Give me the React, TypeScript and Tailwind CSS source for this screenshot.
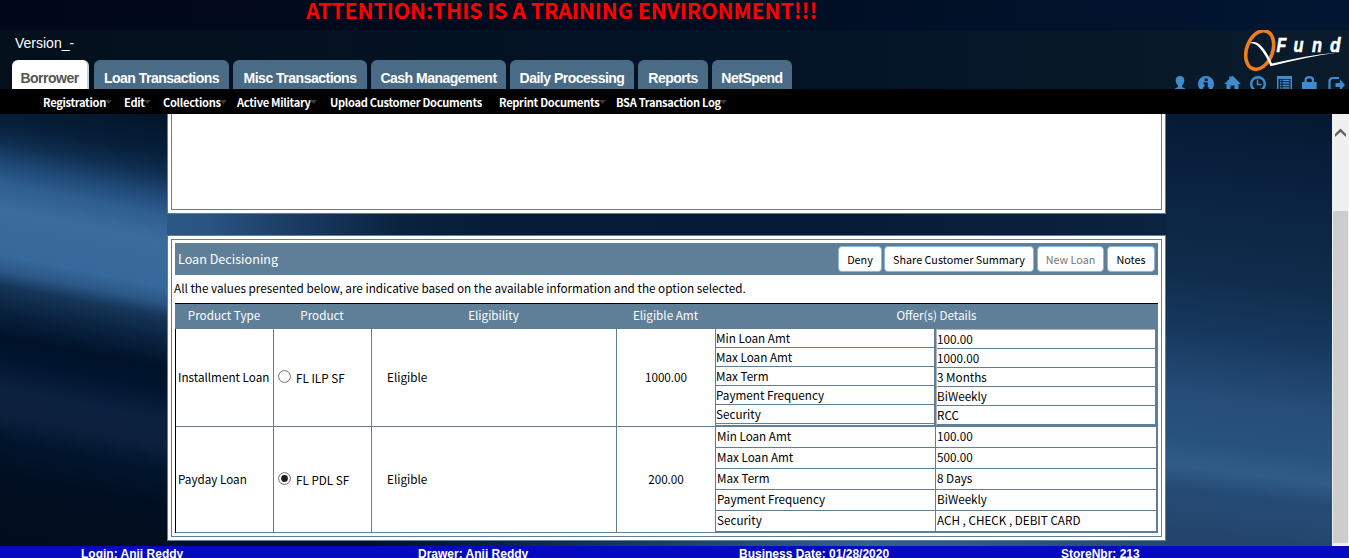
import React from "react";

const tabs = [
  { label: "Borrower", cls: "ml-3 w-[77px] mr-[5px] bg-white text-[#555] border-r-2 border-[#c9d3db]" },
  { label: "Loan Transactions", cls: "w-[135px] mr-1 bg-[#4a6b85] text-white" },
  { label: "Misc Transactions", cls: "w-[134px] mr-1 bg-[#4a6b85] text-white" },
  { label: "Cash Management", cls: "w-[135px] mr-1 bg-[#4a6b85] text-white" },
  { label: "Daily Processing", cls: "w-[124px] mr-1 bg-[#4a6b85] text-white" },
  { label: "Reports", cls: "w-[70px] mr-1 bg-[#4a6b85] text-white" },
  { label: "NetSpend", cls: "w-[80px] bg-[#4a6b85] text-white" },
];

const menu = [
  { label: "Registration", cls: "w-[81px]", arrow: true },
  { label: "Edit", cls: "w-[39px]", arrow: true },
  { label: "Collections", cls: "w-[74px]", arrow: true },
  { label: "Active Military", cls: "w-[93px]", arrow: true },
  { label: "Upload Customer Documents", cls: "w-[169px]", arrow: false },
  { label: "Reprint Documents", cls: "w-[117px]", arrow: true },
  { label: "BSA Transaction Log", cls: "w-[120px]", arrow: true },
];

const names = ["Min Loan Amt", "Max Loan Amt", "Max Term", "Payment Frequency", "Security"];
const installment = ["100.00", "1000.00", "3 Months", "BiWeekly", "RCC"];
const payday = ["100.00", "500.00", "8 Days", "BiWeekly", "ACH , CHECK , DEBIT CARD"];

function Logo() {
  return (
    <svg className="block h-[42px] w-[105px]" viewBox="0 0 105 42">
      <ellipse cx="15.700" cy="20" rx="13" ry="20" transform="rotate(20 15.700 20)" fill="none" stroke="#ee7d1a" strokeWidth="3.600" />
      <path d="M5.500 13.300C12 9 19 16 24 25.500L28 33.500C50 28.500 72 24 94 22.500C72 25.500 50 30 26.500 36.300C24.500 31 22 26.500 18.500 21.500C14 15 10.500 13 5.500 13.300Z" fill="#fff" />
      <g fill="#fff" stroke="#fff" strokeWidth=".6" fontFamily="Liberation Sans, sans-serif" fontSize="21" fontWeight="700" fontStyle="italic">
        <text transform="translate(32.500 21.500) scale(.76 1)">F</text>
        <text transform="translate(49.500 21.500) scale(.78 1)">u</text>
        <text transform="translate(68 21.500) scale(.78 1)">n</text>
        <text transform="translate(86 21.500) scale(.82 1)">d</text>
      </g>
    </svg>
  );
}

function ToolIcons() {
  return (
    <svg className="block h-[14px] w-[176px]" viewBox="1173 75 176 14" fill="#428bca">
      <path d="M1180 76c3 0 4.300 1.800 4.300 4.200 0 2.500-1 4-2.300 5.200v1.600c1 .8 3.700 1.200 4 3h-12c.3-1.800 3-2.200 4-3v-1.600c-1.300-1.200-2.300-2.700-2.300-5.200 0-2.400 1.300-4.200 4.300-4.200z" />
      <circle cx="1206" cy="84" r="8" />
      <path d="M1204.700 78.500h3v2.500h-3zM1203.500 82.200h4.200v5h1.200v2h-5.900v-2h1.500v-3h-1z" fill="#07172a" />
      <path d="M1232.500 75.500l8.300 8.500h-2.300v6h-4v-4.500h-4v4.500h-4v-6h-2.300l5-5v-2.500h2.500v.5z" />
      <circle cx="1258" cy="84" r="6.800" fill="none" stroke="#428bca" strokeWidth="2.400" />
      <path d="M1257.500 79.500v5h4" fill="none" stroke="#428bca" strokeWidth="1.500" />
      <path d="M1277 76h15v14h-15zM1278.500 79v11h12v-11z" fillRule="evenodd" />
      <path d="M1280 80.500h1.500M1282.500 80.500h7M1280 83h1.500M1282.500 83h7M1280 85.500h1.500M1282.500 85.500h7M1280 88h1.500M1282.500 88h7" stroke="#428bca" strokeWidth="1.300" />
      <path d="M1302 82h2.500v-2.500q0-3.500 4.800-3.500t4.800 3.500v2.500h2.500v8h-14.600zM1306.800 82h5v-2.200q0-1.600-2.500-1.600t-2.500 1.600z" fillRule="evenodd" />
      <path d="M1339 78h-6q-3.500 0-3.500 3.500v9" fill="none" stroke="#428bca" strokeWidth="2.200" />
      <path d="M1335.500 83h4.500v-3.500l5 5.500-5 5.500v-3.500h-4.500z" />
    </svg>
  );
}

function Radio({ checked }: { checked: boolean }) {
  return (
    <svg className="mb-[2px] block size-[13px] shrink-0" viewBox="0 0 13 13">
      <circle cx="6.500" cy="6.500" r="5.900" fill="#fff" stroke="#707070" />
      {checked && <circle cx="6.500" cy="6.500" r="3.400" fill="#1c1c1c" />}
    </svg>
  );
}

function ActionButton({ label, cls }: { label: string; cls: string }) {
  return (
    <button className={`h-[26px] whitespace-nowrap rounded-[4px] border border-[#8bb6da] bg-white text-[10.8px] leading-[22px] ${cls}`}>
      {label}
    </button>
  );
}

function App() {
  return (
    <div className="flex h-[558px] w-[1349px] flex-col overflow-hidden bg-[#01102a] font-['Noto_Sans_CJK_SC','Noto_Sans',sans-serif] text-[11.7px] leading-[16px] text-black">
      <div className="h-[30px] shrink-0 bg-linear-to-r from-[#010718] via-[#000d20] to-[#021633]">
        <div className="ml-[306px] h-[19px] whitespace-nowrap text-[21.22px] font-bold leading-[19px] text-[#ff0000]">ATTENTION:THIS IS A TRAINING ENVIRONMENT!!!</div>
      </div>
      <header className="flex h-[59px] shrink-0 justify-between bg-linear-to-r from-[#04101c] via-[#031326] to-[#0a1b2b] font-['Liberation_Sans',sans-serif]">
        <div className="flex flex-col">
          <div className="h-[30px] pl-[15px] pt-[5px] text-[14px] text-white">Version_-</div>
          <div className="flex h-[29px]">
            {tabs.map((t) => (
              <div key={t.label} className={`flex h-[29px] items-end justify-center whitespace-nowrap rounded-t-[6px] pb-[3px] text-[14px] font-bold tracking-[-0.5px] ${t.cls}`}>
                {t.label}
              </div>
            ))}
          </div>
        </div>
        <div className="flex flex-col items-end">
          <Logo />
          <div className="mt-[3px]"><ToolIcons /></div>
        </div>
      </header>
      <nav className="flex h-[25px] shrink-0 bg-black pl-[43px] pt-[5px] text-[11.1px] font-bold tracking-[-0.3px] text-white">
        {menu.map((m) => (
          <div key={m.label} className={`flex whitespace-nowrap ${m.cls}`}>
            <span>{m.label}</span>
            {m.arrow && <svg className="-ml-px mt-[6px] h-1 w-[7px] shrink-0" viewBox="0 0 7 4"><path d="M0 0h7L3.500 4z" fill="#3a3a3a" /></svg>}
          </div>
        ))}
      </nav>
      <div className="flex h-[432px] shrink-0">
        <div className="w-[167px] shrink-0 bg-[linear-gradient(191deg,#02142a_0px,#071f3b_40px,#0f2f52_60px,#1d4673_78px,#2f5e90_100px,#3a6c9d_125px,#36689b_170px,#2c5888_185px,#163558_200px,#0a2341_222px,#001229_250px,#011530_272px,#0c213f_300px,#0d213e_325px,#02152e_350px,#010f22_385px,#010d1d_460px)]" />
        <main className="w-[999px] shrink-0 bg-linear-to-r from-[#01102a] from-20% via-[#2f6290] via-70% to-[#24496f]">
          <section className="h-[100px] border border-t-0 border-[#5f7e97] bg-white px-[3px] pb-[3px]">
            <div className="h-full border border-t-0 border-[#5f7e97]" />
          </section>
          <div className="h-[21px] bg-[linear-gradient(90deg,#2b5885_0px,#2a5482_40px,#1a3b63_130px,#0a2340_230px,#061c38_330px,#061b38_650px,#0b2240_999px)]" />
          <section className="h-[306px] border border-[#5f7e97] bg-white p-[3px]">
            <div className="h-full border border-[#5f7e97] p-[3px]">
              <div className="flex h-8 items-center justify-between bg-[#5f7e97] px-[3px]">
                <h2 className="text-[12.6px] text-white">Loan Decisioning</h2>
                <div className="flex">
                  <ActionButton label="Deny" cls="w-[44px] mr-[2px]" />
                  <ActionButton label="Share Customer Summary" cls="w-[150px] mr-[3px]" />
                  <ActionButton label="New Loan" cls="w-[67px] mr-[3px] text-[#777]" />
                  <ActionButton label="Notes" cls="w-[48px]" />
                </div>
              </div>
              <p className="-ml-px h-7 pt-[5px] text-[11.72px]">All the values presented below, are indicative based on the available information and the option selected.</p>
              <div className="h-[230px] border-l border-t border-black">
                <div className="-ml-px grid h-[25px] grid-cols-[98px_98px_245px_99px_443px] bg-[#5f7e97] pt-[3px] text-center text-white">
                  <span>Product Type</span><span>Product</span><span>Eligibility</span><span>Eligible Amt</span><span>Offer(s) Details</span>
                </div>
                <div className="grid h-[98px] grid-cols-[98px_98px_245px_99px_442px] border-b border-[#5f7e97]">
                  <div className="flex items-center whitespace-nowrap border-r border-[#5f7e97] pb-px pl-[2px]">Installment Loan</div>
                  <div className="flex items-center border-r border-[#5f7e97] pl-1"><Radio checked={false} /><span className="ml-[5px] mt-px">FL ILP SF</span></div>
                  <div className="flex items-center border-r border-[#5f7e97] pb-px pl-[15px]">Eligible</div>
                  <div className="flex items-center justify-center border-r border-[#5f7e97] pb-px">1000.00</div>
                  <div className="flex border-b border-r-3 border-[#5f7e97]">
                    <div className="w-[218px]">
                      {names.map((n) => <div key={n} className="h-[19px] border-b border-[#5f7e97] leading-[17px]">{n}</div>)}
                    </div>
                    <div className="w-[221px] border-l-2 border-[#5f7e97]">
                      <div className="border-l border-t border-[#b4b4b4]">
                        {installment.map((n) => <div key={n} className="h-[19px] border-b border-[#5f7e97] leading-[17px]">{n}</div>)}
                      </div>
                    </div>
                  </div>
                </div>
                <div className="grid h-[106px] grid-cols-[98px_98px_245px_99px_442px] border-b border-[#5f7e97]">
                  <div className="flex items-center border-r border-[#5f7e97] pb-px pl-[2px]">Payday Loan</div>
                  <div className="flex items-center border-r border-[#5f7e97] pl-1"><Radio checked /><span className="ml-[5px] mt-px">FL PDL SF</span></div>
                  <div className="flex items-center border-r border-[#5f7e97] pb-px pl-[15px]">Eligible</div>
                  <div className="flex items-center justify-center border-r border-[#5f7e97] pb-px">200.00</div>
                  <div className="grid grid-cols-[220px_1fr] border-r-2 border-[#5f7e97]">
                    {names.map((n, i) => (
                      <React.Fragment key={n}>
                        <div className="h-[21px] border-b border-r border-[#5f7e97] pl-px leading-[18px]">{n}</div>
                        <div className="h-[21px] border-b border-[#5f7e97] pl-px leading-[18px]">{payday[i]}</div>
                      </React.Fragment>
                    ))}
                  </div>
                </div>
              </div>
            </div>
          </section>
        </main>
        <div className="w-[166px] shrink-0 bg-[linear-gradient(187deg,#041832_0px,#0a2341_90px,#102d4d_180px,#17395f_235px,#264d78_295px,#28527e_340px,#305d87_367px,#254b75_390px,#24466e_430px)]" />
        <div className="flex w-[17px] shrink-0 flex-col items-center bg-[#f0f0f0]">
          <svg className="mt-[14px] h-[9px] w-[11px]" viewBox="0 0 11 9"><path d="M0 6L5.500 .5 11 6v3L5.500 4 0 9z" fill="#606060" /></svg>
          <div className="mt-[74px] h-[332px] w-[15px] bg-[#cdcdcd]" />
        </div>
      </div>
      <footer className="flex h-3 shrink-0 overflow-hidden bg-[#050abe] pl-[81px] font-['Liberation_Sans',sans-serif] text-[12px] font-bold text-white">
        <span className="w-[337px] shrink-0">Login: Anji Reddy</span>
        <span className="w-[321px] shrink-0">Drawer: Anji Reddy</span>
        <span className="w-[322px] shrink-0">Business Date: 01/28/2020</span>
        <span>StoreNbr: 213</span>
      </footer>
    </div>
  );
}

export default App;
